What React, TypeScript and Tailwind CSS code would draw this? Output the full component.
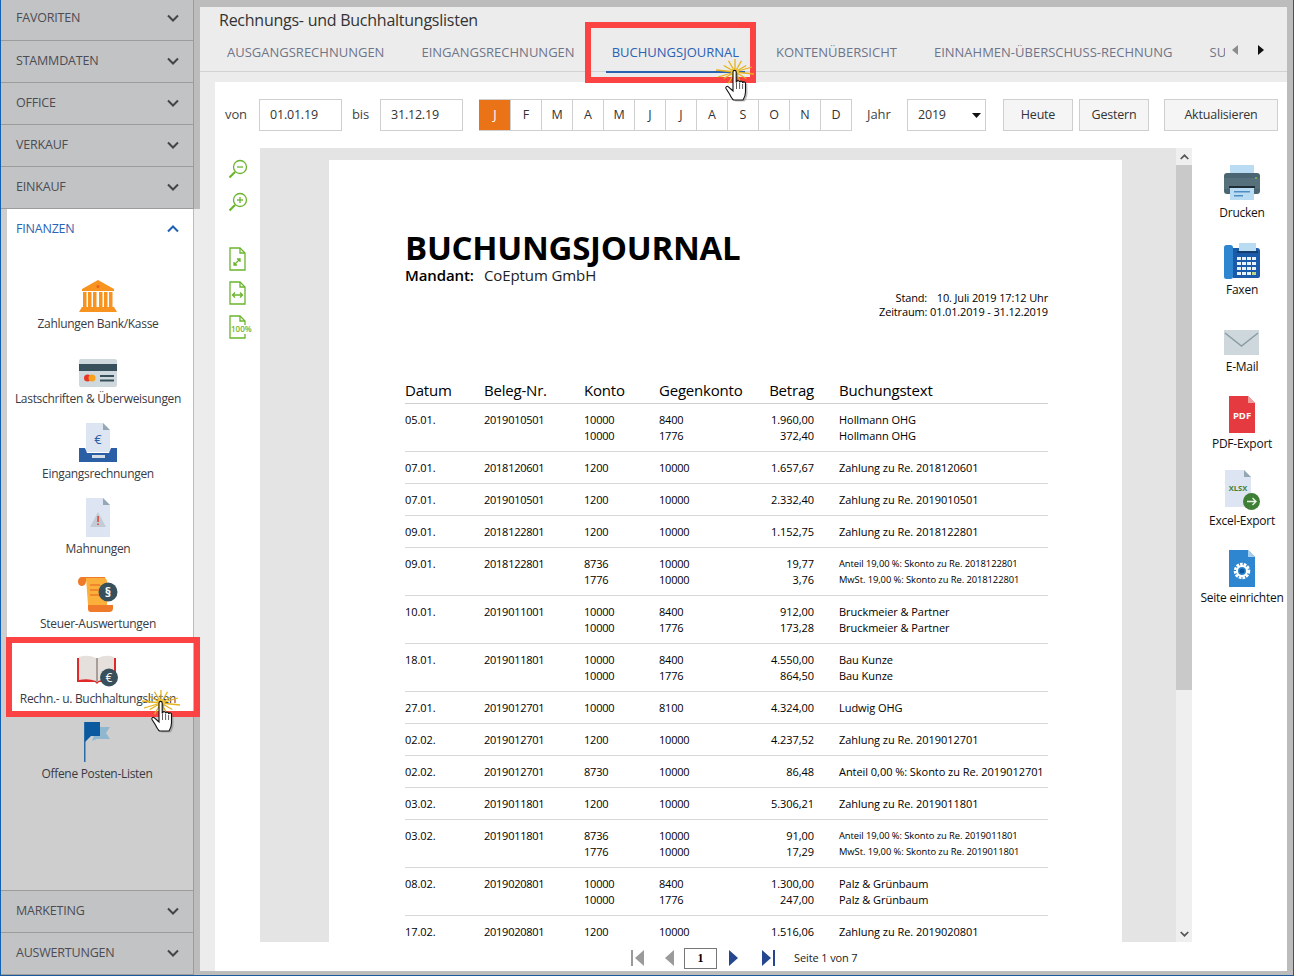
import React from 'react';

const FONT = 'font-["Open_Sans","Noto_Sans",sans-serif]';

type Line = { konto: string; gegen: string; betrag: string; text: string; small?: boolean };
type Row = { datum: string; beleg: string; lines: Line[] };

const zahlung = (datum: string, beleg: string, betrag: string, re: string): Row => ({
  datum,
  beleg,
  lines: [{ konto: '1200', gegen: '10000', betrag, text: `Zahlung zu Re. ${re}` }],
});

const rows: Row[] = [
  { datum: '05.01.', beleg: '2019010501', lines: [
    { konto: '10000', gegen: '8400', betrag: '1.960,00', text: 'Hollmann OHG' },
    { konto: '10000', gegen: '1776', betrag: '372,40', text: 'Hollmann OHG' },
  ] },
  zahlung('07.01.', '2018120601', '1.657,67', '2018120601'),
  zahlung('07.01.', '2019010501', '2.332,40', '2019010501'),
  zahlung('09.01.', '2018122801', '1.152,75', '2018122801'),
  { datum: '09.01.', beleg: '2018122801', lines: [
    { konto: '8736', gegen: '10000', betrag: '19,77', text: 'Anteil 19,00 %: Skonto zu Re. 2018122801', small: true },
    { konto: '1776', gegen: '10000', betrag: '3,76', text: 'MwSt. 19,00 %: Skonto zu Re. 2018122801', small: true },
  ] },
  { datum: '10.01.', beleg: '2019011001', lines: [
    { konto: '10000', gegen: '8400', betrag: '912,00', text: 'Bruckmeier & Partner' },
    { konto: '10000', gegen: '1776', betrag: '173,28', text: 'Bruckmeier & Partner' },
  ] },
  { datum: '18.01.', beleg: '2019011801', lines: [
    { konto: '10000', gegen: '8400', betrag: '4.550,00', text: 'Bau Kunze' },
    { konto: '10000', gegen: '1776', betrag: '864,50', text: 'Bau Kunze' },
  ] },
  { datum: '27.01.', beleg: '2019012701', lines: [{ konto: '10000', gegen: '8100', betrag: '4.324,00', text: 'Ludwig OHG' }] },
  zahlung('02.02.', '2019012701', '4.237,52', '2019012701'),
  { datum: '02.02.', beleg: '2019012701', lines: [{ konto: '8730', gegen: '10000', betrag: '86,48', text: 'Anteil 0,00 %: Skonto zu Re. 2019012701' }] },
  zahlung('03.02.', '2019011801', '5.306,21', '2019011801'),
  { datum: '03.02.', beleg: '2019011801', lines: [
    { konto: '8736', gegen: '10000', betrag: '91,00', text: 'Anteil 19,00 %: Skonto zu Re. 2019011801', small: true },
    { konto: '1776', gegen: '10000', betrag: '17,29', text: 'MwSt. 19,00 %: Skonto zu Re. 2019011801', small: true },
  ] },
  { datum: '08.02.', beleg: '2019020801', lines: [
    { konto: '10000', gegen: '8400', betrag: '1.300,00', text: 'Palz & Grünbaum' },
    { konto: '10000', gegen: '1776', betrag: '247,00', text: 'Palz & Grünbaum' },
  ] },
  { datum: '17.02.', beleg: '2019020801', lines: [{ konto: '1200', gegen: '10000', betrag: '1.516,06', text: 'Zahlung zu Re. 2019020801' }] },
];

const Chevron = ({ up, blue }: { up?: boolean; blue?: boolean }) => (
  <svg width="12" height="8" viewBox="0 0 12 8" fill="none" stroke={blue ? '#2060b0' : '#444'} strokeWidth="2">
    <path d={up ? 'M1 6.5 6 1.5l5 5' : 'M1 1.5l5 5 5-5'} />
  </svg>
);

const NavRow = ({ label, first }: { label: string; first?: boolean }) => (
  <div className={`flex w-[192px] items-center justify-between border-b border-[#9c9c9c] bg-[#c2c3c4] pl-[15px] pr-[14px] ${first ? 'h-[41px] pb-[4px]' : 'h-[42px] pb-[2px]'}`}>
    <span className="mt-[1px] text-[12.500px] leading-none tracking-[-0.2px] text-[#4c4c54]">{label}</span>
    <Chevron />
  </div>
);

// hand cursor with the yellow click burst behind it
const ClickCursor = ({ className }: { className: string }) => (
  <svg className={className} width="40" height="50" viewBox="0 0 40 50">
    <g stroke="#e5b21a" strokeWidth="1.3">
      {[0, 30, 60, 120, 150].map((a) => (
        <line key={a} x1="20" y1="2" x2="20" y2="28" transform={`rotate(${a} 20 15)`} />
      ))}
      <line x1="1" y1="13" x2="39" y2="17" />
      <line x1="3" y1="20" x2="37" y2="10" />
    </g>
    <circle cx="20" cy="15" r="4" fill="#f0c53a" />
    <path d="M18.500 15.500a1.600 1.600 0 0 1 3.200 0V25h.4a1.500 1.500 0 0 1 3 .4 1.500 1.500 0 0 1 3 .6 1.500 1.500 0 0 1 2.900 1V35c0 3-1.500 6.500-2.500 8H19c-1.500-1-3-4-4-6l-3.500-5.500c-.8-1.500 1-3 2.400-1.700l4.600 4Z" fill="#777" opacity=".45" transform="translate(1.500 1.500)" />
    <path d="M18 15a1.600 1.600 0 0 1 3.200 0V25h.4a1.500 1.500 0 0 1 3 .4 1.500 1.500 0 0 1 3 .6 1.500 1.500 0 0 1 2.900 1V35c0 3-1.500 6.500-2.500 8H18.500c-1.500-1-3-4-4-6L11 31.500c-.8-1.500 1-3 2.400-1.700L18 34Z" fill="#fff" stroke="#111" strokeWidth="1.100" />
    <path d="M21.500 26v6M24.600 26v6M27.600 27v5" stroke="#333" strokeWidth=".8" />
  </svg>
);

const BankIcon = () => (
  <svg width="38" height="32" viewBox="0 0 38 32">
    <path d="M19 0 35 9v2H3V9Z" fill="#f7931e" />
    <circle cx="19" cy="6.500" r="1.500" fill="#e8601c" />
    {[5, 10, 15, 21, 26, 31].map((x) => <rect key={x} x={x - 1} y="12" width="3.500" height="15" fill="#f7931e" />)}
    <path d="M3 27h32l3 5H0Z" fill="#f7931e" />
  </svg>
);

const CardIcon = () => (
  <svg width="38" height="28" viewBox="0 0 38 28">
    <rect width="38" height="28" rx="2" fill="#cfd8dc" />
    <rect y="5" width="38" height="7" fill="#37505c" />
    <circle cx="8.500" cy="19" r="3.500" fill="#e8352b" />
    <circle cx="13" cy="19" r="3.500" fill="#f7a11e" />
    <rect x="21" y="16" width="14" height="2" fill="#37505c" />
    <rect x="21" y="20.500" width="14" height="2" fill="#37505c" />
  </svg>
);

const InboxIcon = () => (
  <svg width="38" height="39" viewBox="0 0 38 39">
    <path d="M7 0h17l7 7v21H7Z" fill="#dde5f2" />
    <path d="M24 0v7h7Z" fill="#94a7b5" />
    <text x="19" y="21" textAnchor="middle" fontSize="13" fontWeight="400" fill="#2b5fa5" fontFamily="Open Sans">€</text>
    <rect x="7" y="24" width="24" height="5" fill="#dde5f2" />
    <path d="M0 25h6l2 5h22l2-5h6v14H0Z" fill="#2b5fa5" />
    <rect x="13" y="32" width="13" height="3" fill="#d5dde8" />
  </svg>
);

const WarnDocIcon = () => (
  <svg width="26" height="39" viewBox="0 0 26 39">
    <path d="M1 0h17l7 7v32H1Z" fill="#dde5f2" />
    <path d="M18 0v7h7Z" fill="#94a7b5" />
    <path d="M13 14 21 29H5Z" fill="#c3ccd6" />
    <rect x="12.300" y="18" width="1.500" height="6" fill="#d9402f" />
    <rect x="12.300" y="25.500" width="1.500" height="1.500" fill="#d9402f" />
  </svg>
);

const TaxIcon = () => (
  <svg width="40" height="35" viewBox="0 0 40 35">
    <path d="M3 0h24v4H8q0 5-5 5-3-1-3-4.500T3 0Z" fill="#ee7a2a" />
    <path d="M8 1h18q3 0 3 4v23H10Z" fill="#fbb03b" />
    <path d="M12 8h10M12 13h10M12 18h10" stroke="#ee7a2a" strokeWidth="1.500" />
    <path d="M10 28h25v3q0 4-4 4H13q-3 0-3-3Z" fill="#ee7a2a" />
    <circle cx="30" cy="15" r="9.500" fill="#37505c" />
    <text x="30" y="20" textAnchor="middle" fontSize="13" fontWeight="700" fill="#fff" fontFamily="Open Sans">§</text>
  </svg>
);

const BookIcon = () => (
  <svg width="42" height="32" viewBox="0 0 42 32">
    <path d="M0 3h39v24H22l-2 2-2-2H0Z" fill="#e02a2a" />
    <path d="M2 2q9-3 17 1v23q-8-3-17-1Z" fill="#e6e0dd" />
    <path d="M21 3q8-4 16-1v23q-8-2-16 1Z" fill="#e6e0dd" />
    <rect x="19" y="3" width="2" height="24" fill="#a89d98" />
    <circle cx="32" cy="22.500" r="9" fill="#37505c" />
    <text x="32" y="27" textAnchor="middle" fontSize="12" fontWeight="400" fill="#fff" fontFamily="Open Sans">€</text>
  </svg>
);

const FlagIcon = () => (
  <svg width="26" height="40" viewBox="0 0 26 40">
    <rect x="0" y="0" width="1.500" height="40" fill="#2b6ba8" />
    <path d="M13 5h13l-4 6 4 6H13l-5 2Z" fill="#8fb7cf" />
    <path d="M1 0h15v14H7l-6 6Z" fill="#0b5aa0" />
  </svg>
);

const PrinterIcon = () => (
  <svg width="36" height="37" viewBox="0 0 36 37">
    <rect x="6" y="0" width="24" height="9" fill="#b9dcf2" />
    <path d="M3 8h30q3 0 3 3v15q0 3-3 3H3q-3 0-3-3V11q0-3 3-3Z" fill="#4b6572" />
    <rect x="0" y="13" width="36" height="11" fill="#56707c" />
    <rect x="5" y="21" width="26" height="2" fill="#1f2e35" />
    <rect x="6" y="23" width="24" height="12" fill="#b9dcf2" />
    <rect x="10" y="26" width="16" height="1.500" fill="#4f8dc5" />
    <rect x="10" y="30" width="9" height="1.500" fill="#4f8dc5" />
    <circle cx="32" cy="13" r="1" fill="#7cc142" />
  </svg>
);

const FaxIcon = () => (
  <svg width="36" height="36" viewBox="0 0 36 36">
    <rect x="0" y="2" width="9" height="34" rx="2.500" fill="#2d86cf" />
    <path d="M9 5h24q3 0 3 3v25q0 2-3 2H9Z" fill="#1b5aa8" />
    <rect x="15" y="0" width="17" height="9" fill="#b9dcf2" />
    <rect x="13" y="8" width="21" height="2" fill="#143c6c" />
    {[14, 19, 24, 29].map((y) => [13, 18, 23, 28].map((x) => (
      <rect key={`${x}-${y}`} x={x} y={y} width="4" height="3" fill={x === 28 && y === 29 ? '#b8d986' : '#e8f2fb'} />
    )))}
  </svg>
);

const MailIcon = () => (
  <svg width="36" height="26" viewBox="0 0 36 26">
    <rect width="35" height="25" fill="#cdd7dc" />
    <path d="M1 3 17.500 16 34 3" fill="none" stroke="#8a9ca6" strokeWidth="1.500" />
  </svg>
);

const PdfIcon = () => (
  <svg width="26" height="37" viewBox="0 0 26 37">
    <path d="M0 0h19l7 7v30H0Z" fill="#e53a40" />
    <path d="M19 0v7h7Z" fill="#f09da0" />
    <text x="13" y="23" textAnchor="middle" fontSize="9.500" fontWeight="700" fill="#fff" fontFamily="Open Sans">PDF</text>
  </svg>
);

const XlsxIcon = () => (
  <svg width="36" height="40" viewBox="0 0 36 40">
    <path d="M1 0h19l7 7v30H1Z" fill="#dde5f2" />
    <path d="M20 0v7h7Z" fill="#94a7b5" />
    <text x="14" y="21" textAnchor="middle" fontSize="7.500" fontWeight="700" fill="#3f7f35" fontFamily="Open Sans">XLSX</text>
    <circle cx="27.500" cy="31.500" r="8.500" fill="#3f7f35" />
    <path d="M23 31.500h9M28.500 28l3.500 3.500-3.500 3.500" fill="none" stroke="#e8f2e6" strokeWidth="1.400" />
  </svg>
);

const PageSetupIcon = () => (
  <svg width="26" height="37" viewBox="0 0 26 37">
    <path d="M0 0h19l7 7v30H0Z" fill="#2d86cf" />
    <path d="M19 0v7h7Z" fill="#a5cfee" />
    <circle cx="13" cy="21" r="6.500" fill="none" stroke="#fff" strokeWidth="3.500" strokeDasharray="2.500 1" />
    <circle cx="13" cy="21" r="5" fill="none" stroke="#fff" strokeWidth="2" />
    <circle cx="13" cy="21" r="2.500" fill="#0b5aa0" />
  </svg>
);

const ZoomIcon = ({ plus }: { plus?: boolean }) => (
  <svg width="20" height="20" viewBox="0 0 20 20" fill="none" stroke="#6ab42d" strokeWidth="1.300">
    <circle cx="12" cy="8" r="6.500" />
    <path d="M7 13 1.500 18.500" strokeWidth="2.200" />
    <path d="M9 8h6" />
    {plus && <path d="M12 5v6" />}
  </svg>
);

const PageZoom = ({ kind }: { kind: 'fit' | 'width' | 'full' }) => (
  <svg className="overflow-visible" width="24" height="24" viewBox="0 0 24 24" fill="none" stroke="#6ab42d" strokeWidth="1.300">
    <path d="M4 1h10l5 5v17H4Z" />
    <path d="M14 1v5h5" />
    {kind === 'fit' && <path d="M8 18l6-6M11 12h3v3M8 15v3h3" />}
    {kind === 'width' && <path d="M6.500 14h10M9 11.500 6.500 14 9 16.500M14 11.500l2.500 2.500-2.500 2.500" />}
    {kind === 'full' && (
      <>
        <rect x="5" y="10" width="20" height="9" fill="#fff" stroke="none" />
        <text x="5" y="17" fontSize="8" stroke="none" fill="#6ab42d" fontFamily="Open Sans" fontWeight="600">100%</text>
      </>
    )}
  </svg>
);

const SideItem = ({ icon, label, short }: { icon: React.ReactNode; label: string; short?: boolean }) => (
  <div className={`flex flex-col items-center justify-end ${short ? 'h-[67px]' : 'h-[75px]'}`}>
    <div className="mb-[2px] flex justify-center">{icon}</div>
    <span className="whitespace-nowrap text-[12px] leading-[20px] tracking-[-0.3px] text-[#3a3a44]">{label}</span>
  </div>
);

const ActionItem = ({ icon, label }: { icon: React.ReactNode; label: string }) => (
  <div className="flex h-[77px] flex-col items-center justify-end">
    <div className="mb-[2px]">{icon}</div>
    <span className="whitespace-nowrap text-[12px] leading-[18px] tracking-[-0.25px] text-[#111]">{label}</span>
  </div>
);

const Box = ({ className, children }: { className: string; children: React.ReactNode }) => (
  <div className={`flex h-[32px] items-center border border-[#cfcfcf] pt-[1px] text-[12.500px] tracking-[-0.2px] text-[#333] ${className}`}>{children}</div>
);

const tabs = ['AUSGANGSRECHNUNGEN', 'EINGANGSRECHNUNGEN', 'BUCHUNGSJOURNAL', 'KONTENÜBERSICHT', 'EINNAHMEN-ÜBERSCHUSS-RECHNUNG', 'SUMMEN'];
const months = ['J', 'F', 'M', 'A', 'M', 'J', 'J', 'A', 'S', 'O', 'N', 'D'];

export default function App() {
  return (
    <div className={`relative flex h-[976px] w-[1294px] overflow-hidden border-b border-r border-[#1a5a9c] bg-[#bcbcbc] ${FONT}`}>
      {/* Sidebar */}
      <div className="flex h-full w-[200px] flex-col border-l border-[#1261b5]">
        <div className="flex">
          <div className="flex flex-col">
            {['FAVORITEN', 'STAMMDATEN', 'OFFICE', 'VERKAUF', 'EINKAUF'].map((l, i) => <NavRow key={l} label={l} first={i === 0} />)}
          </div>
          <div className="w-px bg-[#9c9c9c]" />
        </div>
        <div className="flex h-[508px]">
          <div className="w-[6px] bg-[#cecece]" />
          <div className="w-[186px] bg-white">
            <div className="flex h-[40px] items-center justify-between pl-[9px] pr-[14px]">
              <span className="text-[12.500px] tracking-[-0.2px] text-[#2b63b5]">FINANZEN</span>
              <Chevron up blue />
            </div>
            <div className="h-[10px]" />
            <div className="pr-[4px]">
              <SideItem icon={<BankIcon />} label="Zahlungen Bank/Kasse" />
              <SideItem icon={<CardIcon />} label="Lastschriften & Überweisungen" />
              <SideItem icon={<InboxIcon />} label="Eingangsrechnungen" />
              <SideItem icon={<WarnDocIcon />} label="Mahnungen" />
              <SideItem icon={<TaxIcon />} label="Steuer-Auswertungen" />
              <SideItem icon={<BookIcon />} label="Rechn.- u. Buchhaltungslisten" />
            </div>
          </div>
          <div className="w-px bg-[#bcbcbc]" />
          <div className="w-[6px] bg-[#ececec]" />
        </div>
        <div className="flex min-h-0 flex-1">
          <div className="flex w-[192px] flex-col bg-[#cecece]">
            <SideItem short icon={<FlagIcon />} label="Offene Posten-Listen" />
            <div className="flex-1" />
            <div className="h-px bg-[#9c9c9c]" />
            <NavRow label="MARKETING" />
            <NavRow label="AUSWERTUNGEN" />
          </div>
          <div className="w-px bg-[#9c9c9c]" />
        </div>
      </div>

      {/* Main area */}
      <div className="flex h-[971px] min-w-0 flex-1 flex-col pt-[7px] pr-[6px]">
        <div className="flex h-full flex-col bg-[#ececec]">
          <div className="px-[19px] pt-[2px] text-[16px] font-medium leading-[22px] tracking-[-0.25px] text-[#333]">Rechnungs- und Buchhaltungslisten</div>
          <div className="flex h-[41px] items-start border-b border-[#d2d2d2]">
            <div className="flex h-[43px] w-[1025px] gap-[37px] overflow-hidden pl-[27px]">
              {tabs.map((t) => (
                <div key={t} className={`shrink-0 whitespace-nowrap pt-[8px] text-[13px] font-medium leading-[26px] ${t === 'BUCHUNGSJOURNAL' ? 'text-[#2a62b4]' : 'text-[#6f7589]'}`}>
                  {t}
                  {t === 'BUCHUNGSJOURNAL' && <div className="mx-[-6px] mt-[6px] h-[2px] bg-[#2a62b4]" />}
                </div>
              ))}
            </div>
            <div className="ml-[7px] mt-[14px] flex items-center gap-[20px]">
              <svg width="6" height="10" viewBox="0 0 6 10"><path d="M6 0v10L0 5Z" fill="#8c8c8c" /></svg>
              <svg width="6" height="10" viewBox="0 0 6 10"><path d="M0 0v10l6-5Z" fill="#111" /></svg>
            </div>
          </div>

          {/* White panel */}
          <div className="ml-[15px] mt-[10px] flex min-h-0 flex-1 flex-col bg-white">
            <div className="flex items-center pl-[10px] pt-[17px] text-[13px] tracking-[-0.1px] text-[#444]">
              <span className="w-[34px]">von</span>
              <Box className="w-[83px] pl-[10px]">01.01.19</Box>
              <span className="ml-[10px] w-[28px]">bis</span>
              <Box className="w-[83px] pl-[10px]">31.12.19</Box>
              <div className="ml-[16px] flex h-[32px] w-[373px] border-y border-r border-[#cfcfcf]">
                {months.map((m, i) => (
                  <div key={i} className={`flex flex-1 items-center justify-center border-l text-[12.500px] ${i === 0 ? 'border-[#ea7317] bg-[#ea7317] text-white' : 'border-[#cfcfcf] text-[#333]'}`}>{m}</div>
                ))}
              </div>
              <span className="ml-[15px] w-[40px]">Jahr</span>
              <Box className="w-[79px] justify-between pl-[10px] pr-[4px]">
                2019
                <svg width="9" height="5" viewBox="0 0 9 5"><path d="M0 0h9L4.500 5Z" fill="#111" /></svg>
              </Box>
              <Box className="ml-[17px] w-[70px] justify-center bg-[#f5f5f5]">Heute</Box>
              <Box className="ml-[6px] w-[70px] justify-center bg-[#f5f5f5]">Gestern</Box>
              <Box className="ml-[15px] w-[114px] justify-center bg-[#f5f5f5]">Aktualisieren</Box>
            </div>

            <div className="mt-[17px] flex min-h-0 flex-1">
              {/* Zoom tools */}
              <div className="flex w-[45px] flex-col items-center pt-[11px]">
                <div className="h-[33px]"><ZoomIcon /></div>
                <div className="h-[55px]"><ZoomIcon plus /></div>
                <div className="h-[34px]"><PageZoom kind="fit" /></div>
                <div className="h-[34px]"><PageZoom kind="width" /></div>
                <PageZoom kind="full" />
              </div>

              <div className="flex min-w-0 flex-col">
                <div className="flex h-[794px]">
                  {/* Document viewer */}
                  <div className="w-[916px] overflow-hidden bg-[#e4e4e4] pl-[69px] pt-[12px]">
                    <div className="h-[900px] w-[793px] bg-white pl-[76px] pr-[74px] pt-[68px] text-black">
                      <div className="text-[33px] font-bold leading-[39px] tracking-[-0.27px]">BUCHUNGSJOURNAL</div>
                      <div className="flex text-[15px] leading-[16px] tracking-[-0.1px]">
                        <span className="w-[79px] font-semibold">Mandant:</span>
                        <span className="text-[#222]">CoEptum GmbH</span>
                      </div>
                      <div className="mt-[8px] text-right text-[11px] leading-[14px] tracking-[-0.15px]">
                        <div><span className="mr-[7px]">Stand:</span> 10. Juli 2019 17:12 Uhr</div>
                        <div>Zeitraum: 01.01.2019 - 31.12.2019</div>
                      </div>
                      <div className="mt-[61px] flex h-[24px] items-center border-b border-[#cfcfcf] pb-[2px] text-[15px] font-medium tracking-[-0.2px]">
                        <span className="w-[79px]">Datum</span>
                        <span className="w-[100px]">Beleg-Nr.</span>
                        <span className="w-[75px]">Konto</span>
                        <span className="w-[90px]">Gegenkonto</span>
                        <span className="w-[65px] text-right">Betrag</span>
                        <span className="ml-[25px]">Buchungstext</span>
                      </div>
                      {rows.map((r, idx) => (
                        <div key={idx} className="flex border-b border-[#d8d8d8] pb-[7px] pt-[8px] text-[11px] leading-[16px] tracking-[-0.05px]">
                          <span className="w-[79px]">{r.datum}</span>
                          <span className="w-[100px] tracking-[-0.25px]">{r.beleg}</span>
                          <div className="flex-1">
                            {r.lines.map((l, i) => (
                              <div key={i} className="flex">
                                <span className="w-[75px] tracking-[-0.2px]">{l.konto}</span>
                                <span className="w-[90px] tracking-[-0.2px]">{l.gegen}</span>
                                <span className="w-[65px] text-right">{l.betrag}</span>
                                <span className={`ml-[25px] whitespace-nowrap ${l.small ? 'text-[9.400px] tracking-[-0.07px]' : ''}`}>{l.text}</span>
                              </div>
                            ))}
                          </div>
                        </div>
                      ))}
                    </div>
                  </div>
                  {/* Scrollbar */}
                  <div className="flex w-[16px] flex-col bg-[#efefef]">
                    <div className="flex h-[17px] items-center justify-center"><svg width="9" height="6" viewBox="0 0 9 6" fill="none" stroke="#555" strokeWidth="1.700"><path d="M.7 5 4.500 1.300 8.300 5" /></svg></div>
                    <div className="h-[525px] bg-[#c9c9c9]" />
                    <div className="flex-1" />
                    <div className="flex h-[17px] items-center justify-center"><svg width="9" height="6" viewBox="0 0 9 6" fill="none" stroke="#555" strokeWidth="1.700"><path d="M.7 1 4.500 4.700 8.300 1" /></svg></div>
                  </div>
                </div>

                {/* Pager */}
                <div className="flex h-[29px] items-center pl-[371px] pt-[3px]">
                  <svg width="13" height="16" viewBox="0 0 13 16" fill="#9a9a9a"><rect width="2" height="16" /><path d="M13 0v16L4 8Z" /></svg>
                  <svg className="ml-[21px]" width="9" height="16" viewBox="0 0 9 16" fill="#9a9a9a"><path d="M9 0v16L0 8Z" /></svg>
                  <div className="ml-[10px] flex h-[21px] w-[33px] items-center justify-center border border-[#777] font-['Liberation_Serif',serif] text-[12px] font-bold text-black">1</div>
                  <svg className="ml-[12px]" width="9" height="16" viewBox="0 0 9 16" fill="#24478f"><path d="M0 0v16l9-8Z" /></svg>
                  <svg className="ml-[24px]" width="13" height="16" viewBox="0 0 13 16" fill="#24478f"><path d="M0 0v16l9-8Z" /><rect x="11" width="2" height="16" /></svg>
                  <span className="ml-[19px] text-[11px] tracking-[-0.12px] text-[#222]">Seite 1 von 7</span>
                </div>
              </div>

              {/* Actions */}
              <div className="-mt-[3px] flex w-[95px] flex-col items-center pl-[5px]">
                <ActionItem icon={<PrinterIcon />} label="Drucken" />
                <ActionItem icon={<FaxIcon />} label="Faxen" />
                <ActionItem icon={<MailIcon />} label="E-Mail" />
                <ActionItem icon={<PdfIcon />} label="PDF-Export" />
                <ActionItem icon={<XlsxIcon />} label="Excel-Export" />
                <ActionItem icon={<PageSetupIcon />} label="Seite einrichten" />
              </div>
            </div>
          </div>
        </div>
      </div>

      {/* Red highlight boxes and cursors */}
      <div className="absolute left-[6px] top-[637px] h-[80px] w-[194px] border-[6px] border-[#fb4343]" />
      <div className="absolute left-[585px] top-[22px] h-[61px] w-[171px] border-[6px] border-[#fb4343]" />
      <ClickCursor className="absolute left-[141px] top-[688px]" />
      <ClickCursor className="absolute left-[715px] top-[57px]" />
    </div>
  );
}
